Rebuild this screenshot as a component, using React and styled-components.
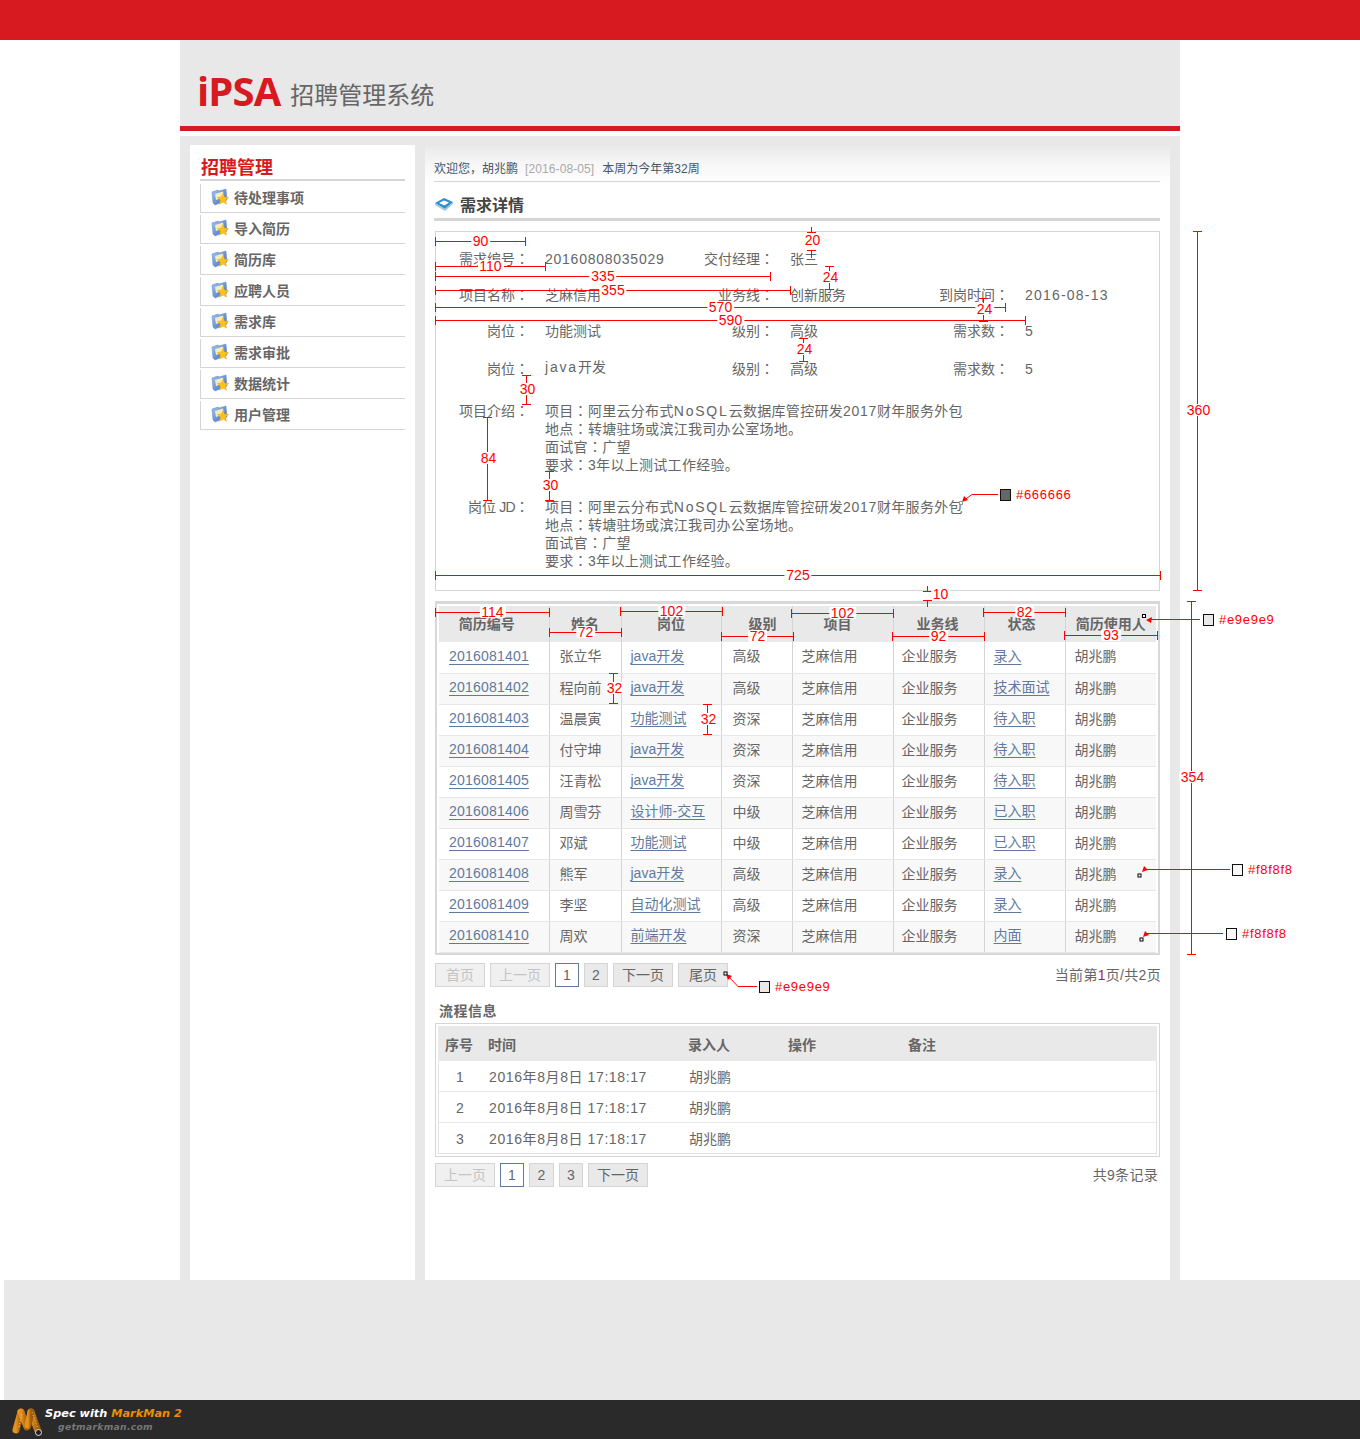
import React from "react";
import styled, { createGlobalStyle } from "styled-components";

const Global = createGlobalStyle`
  html, body { margin: 0; padding: 0; background: #fff; }
  body { font: 14px/18px "Liberation Sans", "Noto Sans CJK SC", sans-serif; color: #666; }
  * { box-sizing: border-box; }
`;

const Page = styled.div`position: relative; width: 1360px; height: 1439px; overflow: hidden;`;
const TopBar = styled.div`height: 40px; background: #d71920;`;
const Shell = styled.div`width: 1000px; height: 1240px; margin-left: 180px; background: #e8e8e8; display: flex; flex-direction: column;`;
const Header = styled.header`height: 91px; padding: 0 0 15px 17px; display: flex; align-items: flex-end; gap: 10px; border-bottom: 5px solid #d71920;`;
const Logo = styled.div`font: 700 40px/44px "Open Sans", sans-serif; color: #d71920; letter-spacing: -0.9px; margin-bottom: -2px;`;
const SystemName = styled.div`font: 400 24px/30px "Noto Sans CJK SC", sans-serif; color: #666; margin-bottom: 2px;`;
const HeaderGap = styled.div`height: 5px; background: #fff;`;
const Content = styled.div`flex: 1; display: flex; gap: 10px; padding: 9px 10px 0; min-height: 0;`;

const Sidebar = styled.aside`width: 225px; background: #fff; padding: 8px 10px 0;`;
const SideTitle = styled.h2`margin: 0 0 3px; padding-left: 1px; height: 28px; border-bottom: 2px solid #d5d5d5; font: 700 18px/26px "Noto Sans CJK SC", sans-serif; color: #d71920;`;
const SideItem = styled.div`
  height: 29px; margin-bottom: 2px; padding: 0 0 2px 10px; display: flex; align-items: center; gap: 5px;
  border-left: 1px solid #d5d5d5; border-bottom: 1px solid #d5d5d5;
  font-weight: 700; color: #666;
  font-family: "Noto Sans CJK SC", sans-serif;
`;

const Main = styled.main`width: 745px; padding: 0 10px; background: linear-gradient(#e9e9e9 0, #f6f6f6 18px, #fff 40px);`;
const Welcome = styled.div`height: 37px; margin-left: -1px; padding-top: 15px; border-bottom: 1px solid #d5d5d5; font-size: 12px; color: #44566a; white-space: nowrap;`;
const DateText = styled.span`color: #aaa; margin: 0 8px 0 7px; letter-spacing: 0.1px;`;
const TitleRow = styled.div`height: 39px; padding-top: 7px; margin-left: -1px; border-bottom: 3px solid #d5d5d5; display: flex; align-items: center; gap: 6px;`;
const Title = styled.h1`margin: 0; font: 700 16px/20px "Noto Sans CJK SC", sans-serif; color: #444;`;

const DetailBox = styled.section`height: 360px; margin-top: 10px; padding-top: 18px; border: 1px solid #d5d5d5;`;
const Row = styled.div`
  display: grid; grid-template-columns: 93px 105px 108px 105px 98px 1fr; column-gap: 16px;
  margin-top: ${(p) => p.$gap || 0}px;
`;
const Label = styled.div`text-align: right; white-space: nowrap; height: 18px;`;
const Colon = styled.span`font-family: "Noto Sans CJK TC", sans-serif; line-height: 0;`;
const Value = styled.div`white-space: nowrap; margin-top: ${(p) => p.$up || 0}px;`;
const Wide = styled.span`letter-spacing: ${(p) => p.$s}px;`;
const Paragraph = styled.div`grid-column: 2 / -1; white-space: nowrap; letter-spacing: 0.3px;`;

const GridBox = styled.section`height: 354px; margin-top: 10px; padding: 2px; border: 2px solid #d8d8d8; border-top-width: 3px;`;
const Table = styled.table`border-collapse: collapse; table-layout: fixed; width: 717px;`;
const Th = styled.th`
  height: 36px; padding: 0 ${(p) => p.$r || 0}px 2px ${(p) => p.$l || 0}px; background: #e9e9e9;
  font: 700 14px/18px "Noto Sans CJK SC", sans-serif; color: #666;
  border-right: 1px solid #d5d5d5; white-space: nowrap; &:last-child { border-right: 0; }
`;
const Tr = styled.tr`background: ${(p) => (p.$alt ? "#f8f8f8" : "#fff")};`;
const Td = styled.td`height: 31px; padding: 0 0 2px ${(p) => p.$l}px; border-right: 1px solid #d5d5d5; border-bottom: 1px solid #e6e6e6; white-space: nowrap; &:last-child { border-right: 0; }`;
const Link = styled.a`color: #5f7a9e; text-decoration: underline; text-underline-offset: 3px; vertical-align: 1px; letter-spacing: ${(p) => p.$s || 0}px;`;

const PagerRow = styled.div`display: flex; align-items: center; justify-content: space-between; margin-top: ${(p) => p.$top}px; height: 24px;`;
const Pager = styled.div`display: flex; gap: 5px;`;
const PageButton = styled.div`
  width: ${(p) => p.$w}px; height: 24px; display: flex; align-items: center; justify-content: center;
  border: 1px solid ${(p) => (p.$active ? "#5f7a9e" : "#d5d5d5")};
  background: ${(p) => (p.$active ? "#fff" : p.$off ? "#f0f0f0" : "#e9e9e9")};
  color: ${(p) => (p.$off ? "#c4c4c4" : "#666")};
`;
const PagerInfo = styled.div`color: #666; margin-right: ${(p) => p.$r}px; letter-spacing: 0.3px;`;
const Strong = styled.span`color: #a5282c;`;

const SectionTitle = styled.h3`margin: 14px 0 4px 4px; height: 18px; font: 700 14px/18px "Noto Sans CJK SC", sans-serif; letter-spacing: 0.5px; color: #666;`;
const FlowBox = styled.section`height: 134px; padding: 2px; border: 1px solid #d5d5d5;`;
const FlowInner = styled.div`height: 128px; border-bottom: 1px solid #e2e2e2; border-left: 1px solid #e2e2e2; border-right: 1px solid #e2e2e2;`;
const FlowHead = styled.div`display: grid; grid-template-columns: 42px 200px 100px 120px 1fr; height: 35px; align-items: center; background: #e9e9e9; font: 700 14px/18px "Noto Sans CJK SC", sans-serif; margin: 0 -1px;`;
const FlowRow = styled.div`display: grid; grid-template-columns: 42px 200px 100px 120px 1fr; height: 31px; padding-top: 1px; align-items: center; border-bottom: 1px solid #e8e8e8; &:last-child { border-bottom: 0; }`;
const FlowNum = styled.div`text-align: center;`;
const FlowCell = styled.div`padding-left: 8px; white-space: nowrap;`;

const FooterBand = styled.div`height: 120px; margin-left: 4px; background: #e8e8e8;`;
const SpecBar = styled.footer`height: 39px; background: #2a2a2a; padding: 7px 0 0 11px; display: flex; gap: 2px;`;
const SpecText = styled.div`font: italic 700 11.3px/14px "DejaVu Sans", sans-serif; color: #fff; white-space: nowrap;`;
const SpecOrange = styled.span`color: #f08c00;`;
const SpecSite = styled.div`font: italic 700 9.2px/12px "DejaVu Sans", sans-serif; color: #777; margin: 0 0 0 13px; letter-spacing: 0.3px;`;

const markFont = `font: 14px/12px "Liberation Sans", sans-serif; color: #f00;`;
const HMark = styled.div`
  position: absolute; left: ${(p) => p.$x}px; top: ${(p) => p.$y}px; width: ${(p) => p.$w}px; height: 1px; background: #f00;
  &::before, &::after { content: ""; position: absolute; top: -4px; width: 1px; height: 9px; background: #f00; }
  &::before { left: 0; } &::after { right: 0; }
`;
const VMark = styled.div`
  position: absolute; left: ${(p) => p.$x}px; top: ${(p) => p.$y}px; width: 1px; height: ${(p) => p.$h}px;
  background: ${(p) => (p.$bare ? "transparent" : "#f00")};
  &::before, &::after { content: ""; position: absolute; left: -4px; width: 9px; height: 1px; background: #f00; }
  &::before { top: 0; } &::after { bottom: 0; }
`;
const Stub = styled.div`position: absolute; left: ${(p) => p.$x}px; top: ${(p) => p.$y}px; width: 1px; height: ${(p) => p.$h}px; background: #f00;`;
const MarkLabel = styled.span`
  ${markFont}
  position: absolute; left: calc(50% + ${(p) => p.$dx || 0}px); top: calc(50% + ${(p) => p.$dy || 0}px); transform: translate(-50%, -50%);
  background: #fff; padding: 0 2px; white-space: nowrap; border-radius: 2px;
`;
const Swatch = styled.div`position: absolute; left: ${(p) => p.$x}px; top: ${(p) => p.$y}px; width: 11px; height: 12px; border: 1px solid #111; background: ${(p) => p.$c};`;
const SwatchText = styled.span`position: absolute; left: ${(p) => p.$x}px; top: ${(p) => p.$y}px; font: 13px/14px "Liberation Sans", sans-serif; letter-spacing: 0.7px; color: #f00;`;
const LeaderLayer = styled.svg`position: absolute; left: 0; top: 0; pointer-events: none;`;

const FolderIcon = () => (
  <svg width="18" height="18" viewBox="0 0 18 18">
    <defs>
      <linearGradient id="fb" x1="0" y1="0" x2="1" y2="1"><stop offset="0" stopColor="#a4c6f0" /><stop offset="1" stopColor="#3a68c0" /></linearGradient>
    </defs>
    <path d="M1 4 L7 2 L8 3 L15 1 L16 12 L4 17 L2 15 Z" fill="url(#fb)" stroke="#5b86c8" strokeWidth=".5" />
    <path d="M4 6 L12 3.5 L13 9 L5 12 Z" fill="#f6ecb8" />
    <path d="M12 5.5 L13.6 9 L17.6 9.5 L14.7 12.1 L15.5 16.2 L12 14.1 L8.5 16.2 L9.3 12.1 L6.4 9.5 L10.4 9 Z" fill="#fbc21a" stroke="#e09a10" strokeWidth=".4" />
  </svg>
);
const BookIcon = () => (
  <svg width="20" height="14" viewBox="0 0 20 14">
    <path d="M1 6 L10 1 L19 5 L11 12 Z" fill="#2f8fc7" />
    <path d="M5 6 L10 3.5 L15 5.5 L10.5 8.5 Z" fill="#fff" />
    <path d="M1 6 L11 12 L19 5 L19 7 L11 14 L1 8 Z" fill="#9fc6dd" />
  </svg>
);
const MarkManLogo = () => (
  <svg width="32" height="30" viewBox="0 0 32 30">
    <defs>
      <linearGradient id="mm" x1="0" y1="0" x2="1" y2="0"><stop offset="0" stopColor="#e8921c" /><stop offset="1" stopColor="#9a5a10" /></linearGradient>
    </defs>
    <g fill="none" stroke="url(#mm)" strokeWidth="7" strokeLinecap="round">
      <path d="M5 23 L10 5" />
      <path d="M10 5 L16 20" />
      <path d="M20 5 L27 24" />
      <path d="M20 5 L17 18" />
    </g>
    <g fill="none" stroke="#f4d48a" strokeWidth="1" strokeDasharray="1 2">
      <path d="M8 20 L11 6" />
      <path d="M21 5 L27 22" />
    </g>
    <circle cx="27.5" cy="25.5" r="3" fill="#222" stroke="#ddd" strokeWidth="1" />
  </svg>
);

const C = () => <Colon>：</Colon>;
const Project = () => (
  <Paragraph>
    项目<C />阿里云分布式<Wide $s={1.8}>NoSQL</Wide>云数据库管控研发<Wide $s={0.7}>2017</Wide>财年服务外包<br />
    地点<C />转塘驻场或滨江我司办公室场地。<br />
    面试官<C />广望<br />
    要求<C /><Wide $s={0.4}>3</Wide>年以上测试工作经验。
  </Paragraph>
);

const headers = [
  ["简历编号", 0, 14], ["姓名", 0, 0], ["岗位", 0, 0], ["级别", 12, 0],
  ["项目", 0, 10], ["业务线", 0, 2], ["状态", 0, 6], ["简历使用人", 0, 0],
];
const widths = [110, 72, 100, 71, 101, 91, 81, 91];
const pads = [10, 10, 9, 11, 9, 8, 9, 9];
const people = [
  ["2016081401", "张立华", "java开发", "高级", "录入"],
  ["2016081402", "程向前", "java开发", "高级", "技术面试"],
  ["2016081403", "温晨寅", "功能测试", "资深", "待入职"],
  ["2016081404", "付守坤", "java开发", "资深", "待入职"],
  ["2016081405", "汪青松", "java开发", "资深", "待入职"],
  ["2016081406", "周雪芬", "设计师-交互", "中级", "已入职"],
  ["2016081407", "邓斌", "功能测试", "中级", "已入职"],
  ["2016081408", "熊军", "java开发", "高级", "录入"],
  ["2016081409", "李坚", "自动化测试", "高级", "录入"],
  ["2016081410", "周欢", "前端开发", "资深", "内面"],
];
const menu = ["待处理事项", "导入简历", "简历库", "应聘人员", "需求库", "需求审批", "数据统计", "用户管理"];
const hMarks = [
  [435, 241, 91, "90"], [435, 266, 111, "110"], [435, 276, 336, "335"], [435, 290, 356, "355"],
  [435, 307, 571, "570"], [435, 320, 591, "590"], [435, 575, 726, "725"],
  [435, 612, 115, "114"], [549, 632, 73, "72"], [620, 611, 103, "102"], [721, 636, 73, "72"],
  [791, 613, 103, "102"], [892, 636, 93, "92"], [983, 612, 83, "82"], [1064, 635, 94, "93"],
];
const vMarks = [
  [829, 266, 24, "24"], [983, 298, 24, "24"], [803, 338, 24, "24"], [526, 375, 30, "30"],
  [487, 417, 84, "84"], [549, 471, 30, "30"], [613, 673, 31, "32"], [707, 704, 31, "32"],
  [1197, 231, 360, "360"], [1191, 601, 354, "354"],
];
const swatches = [
  [1203, 614, "#e9e9e9", 1219, 613], [1000, 489, "#666666", 1016, 488], [1232, 864, "#f8f8f8", 1248, 863],
  [1226, 928, "#f8f8f8", 1242, 927], [759, 981, "#e9e9e9", 775, 980],
];

const Dot = ({ x, y, c = "#000" }) => <rect x={x - 1.5} y={y - 1.5} width="3" height="3" fill="#fff" stroke={c} strokeWidth="1" />;

export default function App() {
  return (
    <Page>
      <Global />
      <TopBar />
      <Shell>
        <Header>
          <Logo>iPSA</Logo>
          <SystemName>招聘管理系统</SystemName>
        </Header>
        <HeaderGap />
        <Content>
          <Sidebar>
            <SideTitle>招聘管理</SideTitle>
            {menu.map((m) => (
              <SideItem key={m}><FolderIcon />{m}</SideItem>
            ))}
          </Sidebar>
          <Main>
            <Welcome>欢迎您，胡兆鹏<DateText>[2016-08-05]</DateText>本周为今年第32周</Welcome>
            <TitleRow><BookIcon /><Title>需求详情</Title></TitleRow>
            <DetailBox>
              <Row>
                <Label>需求编号<C /></Label><Value><Wide $s={0.75}>20160808035029</Wide></Value>
                <Label>交付经理<C /></Label><Value>张三</Value>
              </Row>
              <Row $gap={18}>
                <Label>项目名称<C /></Label><Value>芝麻信用</Value>
                <Label>业务线<C /></Label><Value>创新服务</Value>
                <Label>到岗时间<C /></Label><Value><Wide $s={1.2}>2016-08-13</Wide></Value>
              </Row>
              <Row $gap={18}>
                <Label>岗位<C /></Label><Value>功能测试</Value>
                <Label>级别<C /></Label><Value>高级</Value>
                <Label>需求数<C /></Label><Value>5</Value>
              </Row>
              <Row $gap={20}>
                <Label>岗位<C /></Label><Value $up={-2}><Wide $s={1.8}>java</Wide>开发</Value>
                <Label>级别<C /></Label><Value>高级</Value>
                <Label>需求数<C /></Label><Value>5</Value>
              </Row>
              <Row $gap={24}><Label>项目介绍<C /></Label><Project /></Row>
              <Row $gap={24}><Label>岗位<Wide $s={-0.7}> JD</Wide><C /></Label><Project /></Row>
            </DetailBox>

            <GridBox>
              <Table>
                <colgroup>{widths.map((w, i) => <col key={i} width={w} />)}</colgroup>
                <thead><tr>{headers.map(([h, l, r]) => <Th key={h} $l={l} $r={r}>{h}</Th>)}</tr></thead>
                <tbody>
                  {people.map((p, i) => (
                    <Tr key={p[0]} $alt={i % 2 === 1}>
                      <Td $l={pads[0]}><Link $s={0.2}>{p[0]}</Link></Td>
                      <Td $l={pads[1]}>{p[1]}</Td>
                      <Td $l={pads[2]}><Link>{p[2]}</Link></Td>
                      <Td $l={pads[3]}>{p[3]}</Td>
                      <Td $l={pads[4]}>芝麻信用</Td>
                      <Td $l={pads[5]}>企业服务</Td>
                      <Td $l={pads[6]}><Link>{p[4]}</Link></Td>
                      <Td $l={pads[7]}>胡兆鹏</Td>
                    </Tr>
                  ))}
                </tbody>
              </Table>
            </GridBox>

            <PagerRow $top={8}>
              <Pager>
                <PageButton $w={50} $off>首页</PageButton>
                <PageButton $w={60} $off>上一页</PageButton>
                <PageButton $w={24} $active>1</PageButton>
                <PageButton $w={24}>2</PageButton>
                <PageButton $w={60}>下一页</PageButton>
                <PageButton $w={50}>尾页</PageButton>
              </Pager>
              <PagerInfo $r={-1}>当前第<Strong>1</Strong>页/共2页</PagerInfo>
            </PagerRow>

            <SectionTitle>流程信息</SectionTitle>
            <FlowBox>
              <FlowInner>
                <FlowHead>
                  <FlowNum>序号</FlowNum><FlowCell>时间</FlowCell><FlowCell>录入人</FlowCell><FlowCell>操作</FlowCell><FlowCell>备注</FlowCell>
                </FlowHead>
                {[1, 2, 3].map((n) => (
                  <FlowRow key={n}>
                    <FlowNum>{n}</FlowNum>
                    <FlowCell><Wide $s={0.6}>2016年8月8日 17:18:17</Wide></FlowCell>
                    <FlowCell>胡兆鹏</FlowCell><FlowCell /><FlowCell />
                  </FlowRow>
                ))}
              </FlowInner>
            </FlowBox>

            <PagerRow $top={6}>
              <Pager>
                <PageButton $w={60} $off>上一页</PageButton>
                <PageButton $w={24} $active>1</PageButton>
                <PageButton $w={25}>2</PageButton>
                <PageButton $w={24}>3</PageButton>
                <PageButton $w={60}>下一页</PageButton>
              </Pager>
              <PagerInfo $r={2}>共9条记录</PagerInfo>
            </PagerRow>
          </Main>
        </Content>
      </Shell>
      <FooterBand />
      <SpecBar>
        <MarkManLogo />
        <div>
          <SpecText>Spec with <SpecOrange>MarkMan 2</SpecOrange></SpecText>
          <SpecSite>getmarkman.com</SpecSite>
        </div>
      </SpecBar>

      {hMarks.map(([x, y, w, t], i) => (
        <HMark key={i} $x={x} $y={y} $w={w}><MarkLabel $dy={-1}>{t}</MarkLabel></HMark>
      ))}
      {vMarks.map(([x, y, h, t], i) => (
        <VMark key={i} $x={x} $y={y} $h={h}><MarkLabel $dx={1} $dy={-1}>{t}</MarkLabel></VMark>
      ))}
      <VMark $x={811} $y={232} $h={19} $bare><MarkLabel $dx={1} $dy={-2}>20</MarkLabel></VMark>
      <Stub $x={811} $y={227} $h={5} /><Stub $x={811} $y={251} $h={7} />
      <VMark $x={927} $y={591} $h={10} $bare><MarkLabel $dx={13} $dy={-2}>10</MarkLabel></VMark>
      <Stub $x={927} $y={586} $h={5} /><Stub $x={927} $y={601} $h={6} />

      <LeaderLayer width="1360" height="1439" viewBox="0 0 1360 1439">
        <g stroke="#f00" strokeWidth="1" fill="none" shapeRendering="crispEdges">
          <path d="M1150 619.5H1200" />
          <path d="M1147 869.5H1230" />
          <path d="M1147 933.5H1223" />
        </g>
        <g stroke="#f00" strokeWidth="1" fill="none">
          <path d="M998 494.5H972L963 501" />
          <path d="M757 986.5H738L727 975" />
        </g>
        <g fill="#f00">
          <path d="M1146 620L1152 617L1151 623Z" />
          <path d="M962 502L964 496L968 500Z" />
          <path d="M726 974L732 976L728 980Z" />
          <path d="M1142 872L1144 866L1148 870Z" />
          <path d="M1143 937L1145 931L1149 935Z" />
        </g>
        <Dot x={1144} y={616} />
        <Dot x={961} y={503} c="#999" />
        <Dot x={1139.5} y={875.5} />
        <Dot x={1141.5} y={939.5} />
        <Dot x={725.5} y={973.5} />
      </LeaderLayer>
      {swatches.map(([x, y, c, tx, ty], i) => (
        <React.Fragment key={i}>
          <Swatch $x={x} $y={y} $c={c} />
          <SwatchText $x={tx} $y={ty}>{c}</SwatchText>
        </React.Fragment>
      ))}
    </Page>
  );
}
